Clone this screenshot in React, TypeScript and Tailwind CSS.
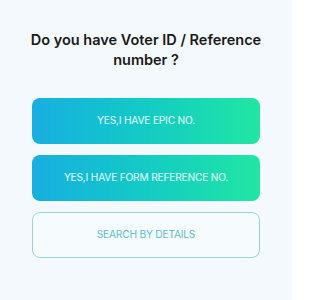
export default function App() {
  return (
    <div className="w-[292px] h-[300px] bg-[#f4f9fd] flex flex-col items-center pt-[30px] font-['Inter',sans-serif]">
      <h2 className="text-[14.5px] leading-[20px] font-semibold text-[#1a1a1a] text-center w-[240px]">
        Do you have Voter ID / Reference number ?
      </h2>
      <div className="mt-[28px] w-[228px] flex flex-col gap-[11px]">
        <button className="h-[46px] rounded-[8px] bg-gradient-to-r from-[#19aee0] to-[#22e6a2] text-[10.2px] text-white/90 tracking-[-0.2px]">
          YES,I HAVE EPIC NO.
        </button>
        <button className="h-[46px] rounded-[8px] bg-gradient-to-r from-[#19aee0] to-[#22e6a2] text-[10.2px] text-white/90 tracking-[-0.2px]">
          YES,I HAVE FORM REFERENCE NO.
        </button>
        <button className="h-[46px] rounded-[8px] border border-[#9cd4db] bg-[#f6fbfe] text-[10.2px] text-[#5cbccf] tracking-[-0.2px]">
          SEARCH BY DETAILS
        </button>
      </div>
    </div>
  );
}
